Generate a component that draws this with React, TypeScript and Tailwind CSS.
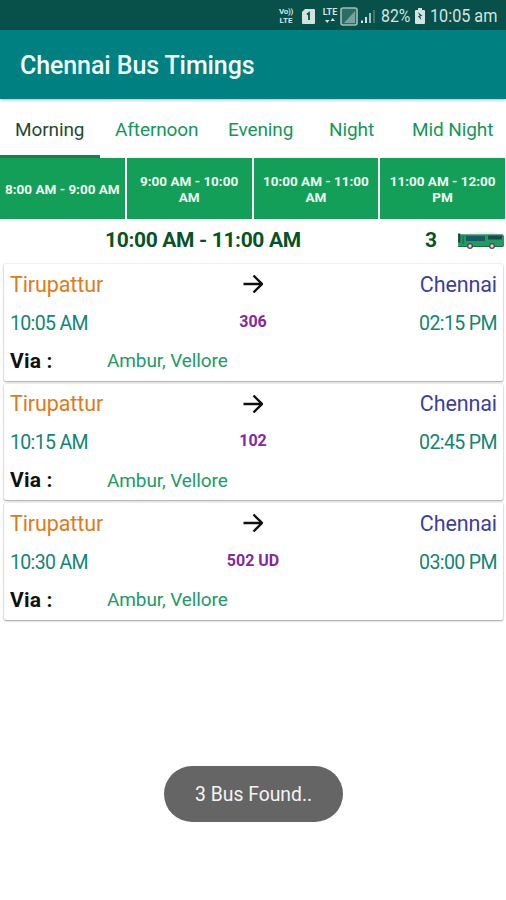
const tabs = [
  { name: 'Morning', className: 'w-[100px] pl-[15px] text-[#1f4a34]' },
  { name: 'Afternoon', className: 'w-[113px] pl-[15px] text-[#16965a]' },
  { name: 'Evening', className: 'w-[101px] pl-[15px] text-[#16965a]' },
  { name: 'Night', className: 'w-[83px] pl-[15px] text-[#16965a]' },
  { name: 'Mid Night', className: 'w-[109px] pl-[15px] text-[#16965a]' },
];

const slots = ['8:00 AM - 9:00 AM', '9:00 AM - 10:00 AM', '10:00 AM - 11:00 AM', '11:00 AM - 12:00 PM'];

const buses = [
  { from: 'Tirupattur', to: 'Chennai', depart: '10:05 AM', arrive: '02:15 PM', route: '306', via: 'Ambur, Vellore' },
  { from: 'Tirupattur', to: 'Chennai', depart: '10:15 AM', arrive: '02:45 PM', route: '102', via: 'Ambur, Vellore' },
  { from: 'Tirupattur', to: 'Chennai', depart: '10:30 AM', arrive: '03:00 PM', route: '502 UD', via: 'Ambur, Vellore' },
];

function StatusBar() {
  return (
    <div className="flex h-[30px] items-center bg-[#07514a] pl-[278px] pt-[2px] text-[#d3e3e0]">
      <div className="flex w-[16px] flex-col items-center text-[8px] font-bold leading-[9px]">
        <span className="tracking-[-0.3px]">Vo))</span>
        <span>LTE</span>
      </div>
      <svg className="ml-[8px] h-[15px] w-[13px]" viewBox="0 0 13 15">
        <path d="M3 0h9a1 1 0 0 1 1 1v13a1 1 0 0 1-1 1H1a1 1 0 0 1-1-1V3z" fill="#d3e3e0" />
        <path d="M5 5.5l2-1.5v7" fill="none" stroke="#07514a" strokeWidth="1.8" />
      </svg>
      <div className="ml-[7px] flex h-[17px] w-[16px] flex-col items-center text-[9px] font-bold leading-[9px]">
        <span>LTE</span>
        <svg className="mt-[1px] h-[5px] w-[10px]" viewBox="0 0 10 5">
          <path d="M0 2h4.5L2.2 5zM5.5 3H10L7.8 0z" fill="#d3e3e0" />
        </svg>
      </div>
      <svg className="ml-[2px] h-[19px] w-[18px]" viewBox="0 0 18 19">
        <rect x="1" y="1" width="16" height="17" rx="2" fill="#2b6c65" stroke="#9fbfba" strokeWidth="1.6" />
        <path d="M15 4v12H4z" fill="#78a49d" />
      </svg>
      <svg className="ml-[3px] h-[14px] w-[15px]" viewBox="0 0 15 14">
        <path d="M0 11.5h2V14H0zM4 8h2v6H4z" fill="#d3e3e0" />
        <path d="M8 4h2v10H8z" fill="#9fbfba" />
        <path d="M12 1h2v13h-2z" fill="#3b7871" />
      </svg>
      <span className="ml-[5px] w-[30px] origin-left scale-x-[0.88] whitespace-nowrap text-[18px] leading-[28px]">82%</span>
      <svg className="ml-[4px] h-[16px] w-[10px]" viewBox="0 0 10 16">
        <path d="M3 0h4v2h2a1 1 0 0 1 1 1v12a1 1 0 0 1-1 1H1a1 1 0 0 1-1-1V3a1 1 0 0 1 1-1h2z" fill="#d3e3e0" />
        <path d="M3 4l4.5 4H5.3l1 4L2.8 8h2z" fill="#07514a" />
      </svg>
      <span className="ml-[5px] w-[68px] origin-left scale-x-[0.9] whitespace-nowrap text-[18px] leading-[28px]">10:05 am</span>
    </div>
  );
}

function BusPicture() {
  return (
    <svg className="h-[18px] w-[48px]" viewBox="0 0 48 18">
      <path d="M8 1.5L20 .5h17l5 1.5z" fill="#e4e8e6" />
      <path d="M2 2.5h43l2 1V14l-1 1H3l-2-1.5z" fill="#1f9c62" />
      <path d="M3 2.5h43V4H3z" fill="#3a8767" />
      <path d="M9 4h19v5H9z" fill="#155b62" />
      <path d="M31 3.5h14v4H31z" fill="#164c4b" />
      <path d="M2.2 1.5v9" stroke="#174438" strokeWidth="2.2" />
      <path d="M6 4v8" stroke="#17704d" strokeWidth="1.5" />
      <path d="M1 14.5h45" stroke="#176c48" strokeWidth="1.2" />
      <path d="M45.5 11H47v2h-1.5z" fill="#8b5a3c" />
      <circle cx="13" cy="14" r="3" fill="#50474b" />
      <circle cx="13" cy="14" r="1.7" fill="#e8cfd0" />
      <circle cx="35" cy="14" r="3" fill="#50474b" />
      <circle cx="35" cy="14" r="1.7" fill="#e8cfd0" />
    </svg>
  );
}

function BusCard({ bus }: { bus: (typeof buses)[number] }) {
  return (
    <article className="h-[116.5px] rounded-[2px] bg-white px-[6px] shadow-[0_1px_2px_rgba(0,0,0,0.35),0_0_1px_1px_rgba(0,0,0,0.05)]">
      <div className="grid h-[42px] grid-cols-[1fr_60px_1fr] items-center text-[21.5px]">
        <span className="tracking-[-0.1px] text-[#df7a19]">{bus.from}</span>
        <svg className="mb-[2px] mr-[1px] h-[20px] w-[20px] justify-self-center" viewBox="0 0 20 20" fill="none" stroke="#111" strokeWidth="2.3">
          <path d="M.5 10H18M10.5 1.5L19 10l-8.5 8.5" />
        </svg>
        <span className="text-right tracking-[-0.1px] text-[#3b3f9c]">{bus.to}</span>
      </div>
      <div className="grid h-[35px] grid-cols-[1fr_90px_1fr] items-center text-[19.5px]">
        <span className="tracking-[-0.65px] text-[#138475]">{bus.depart}</span>
        <span className="pb-[4px] pr-px text-center text-[16px] font-bold text-[#8427a3]">{bus.route}</span>
        <span className="text-right tracking-[-0.6px] text-[#138475]">{bus.arrive}</span>
      </div>
      <div className="flex h-[41px] items-center">
        <span className="w-[97px] text-[21px] font-bold tracking-[0.2px] text-[#111]">Via :</span>
        <span className="text-[19px] tracking-[-0.1px] text-[#209b68]">{bus.via}</span>
      </div>
    </article>
  );
}

export default function App() {
  return (
    <main className="relative h-[900px] w-[506px] overflow-hidden bg-white font-[Roboto,sans-serif]">
      <StatusBar />
      <header className="relative flex h-[69px] items-center bg-[#008080] pl-[20px] pt-[3px] shadow-[0_1px_3px_rgba(0,0,0,0.3)]">
        <h1 className="text-[25px] font-medium tracking-[-0.1px] text-[#f2fbfb]">Chennai Bus Timings</h1>
      </header>

      <nav className="flex h-[59px]">
        {tabs.map((tab, i) => (
          <button key={tab.name} className={`flex flex-none items-center whitespace-nowrap text-[19px] tracking-[-0.1px] ${tab.className} ${i === 0 ? 'border-b-[3px] border-[#168050] pt-[6px]' : 'pt-[3px]'}`}>
            {tab.name}
          </button>
        ))}
      </nav>

      <div className="grid h-[61px] grid-cols-4 gap-[2px] pr-px">
        {slots.map((slot) => (
          <button key={slot} className="flex items-center justify-center bg-[#149f59] px-[3px] text-center text-[13.5px] font-bold leading-[16px] text-[#eefaf3]">
            {slot}
          </button>
        ))}
      </div>

      <div className="flex h-[45px] items-center pb-[2px] text-[21px] font-bold text-[#075325]">
        <h2 className="ml-[105px] w-[320px] tracking-[-0.35px]">10:00 AM - 11:00 AM</h2>
        <span className="w-[32px]">3</span>
        <BusPicture />
      </div>

      <section className="flex flex-col gap-[3px] pl-[4px] pr-[3px]">
        {buses.map((bus) => (
          <BusCard key={bus.depart} bus={bus} />
        ))}
      </section>

      <div className="absolute left-[164px] top-[766px] flex h-[56px] w-[179px] items-center justify-center rounded-full bg-[#656565] pt-[2px] text-[21px] text-[#f4f4f4]">
        <span className="scale-x-[0.92] whitespace-nowrap">3 Bus Found..</span>
      </div>
    </main>
  );
}
